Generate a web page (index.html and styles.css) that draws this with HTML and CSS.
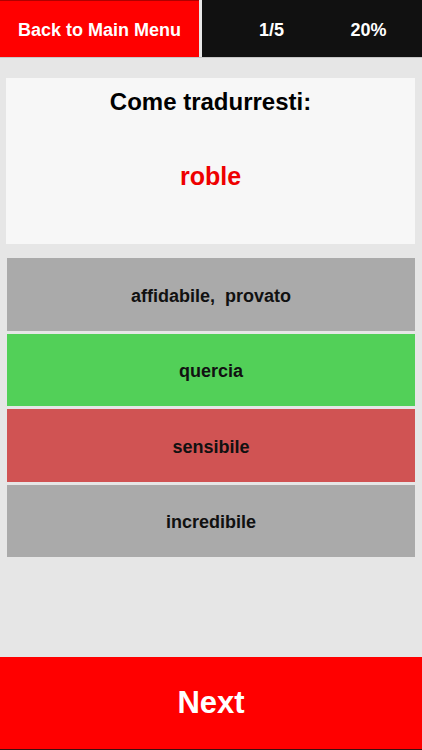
FILE: index.html
```html
<!DOCTYPE html>
<html lang="it">
<head>
<meta charset="utf-8">
<title>Quiz</title>
<link rel="stylesheet" href="styles.css">
</head>
<body>
<div class="app">
  <header class="topbar">
    <div class="back">Back to Main Menu</div>
    <div class="stats">
      <div class="stat">1/5</div>
      <div class="stat">20%</div>
    </div>
  </header>
  <main class="main">
    <section class="card">
      <div class="question">Come tradurresti:</div>
      <div class="word">roble</div>
    </section>
    <div class="options">
      <div class="option">affidabile,&nbsp; provato</div>
      <div class="option correct">quercia</div>
      <div class="option wrong">sensibile</div>
      <div class="option">incredibile</div>
    </div>
  </main>
  <footer class="next">Next</footer>
</div>
</body>
</html>
```
FILE: styles.css
```css
html, body {
  margin: 0;
  padding: 0;
}
body {
  background: #e6e6e6;
  font-family: "Liberation Sans", Arial, sans-serif;
  font-weight: bold;
}
.app {
  display: flex;
  flex-direction: column;
  height: 750px;
}
.topbar {
  display: flex;
  height: 57px;
  gap: 3px;
  background: #e8e8e8;
  border-bottom: 1px solid #c8c8c8;
}
.back {
  width: 199px;
  background: #ff0000;
  color: #fff;
  font-size: 18px;
  display: flex;
  align-items: center;
  justify-content: center;
  box-sizing: border-box;
  padding-top: 3px;
  border-top: 1px solid #b00000;
}
.stats {
  flex: 1;
  background: #111111;
  color: #fff;
  font-size: 18px;
  display: flex;
  padding-left: 21px;
  box-sizing: border-box;
  padding-top: 3px;
}
.stat {
  width: 97px;
  display: flex;
  align-items: center;
  justify-content: center;
}
.main {
  flex: 1;
  display: flex;
  flex-direction: column;
}
.card {
  margin: 20px 7px 0 6px;
  height: 166px;
  box-sizing: border-box;
  padding-top: 10px;
  background: #f7f7f7;
  text-align: center;
}
.question {
  font-size: 24px;
  color: #000;
}
.word {
  font-size: 25px;
  color: #ee0000;
  margin-top: 46px;
}
.options {
  margin: 14px 7px 0 7px;
  display: flex;
  flex-direction: column;
  gap: 3px;
}
.option {
  height: 72.5px;
  box-sizing: border-box;
  padding-top: 4px;
  background: #aaaaaa;
  color: #111;
  font-size: 18px;
  display: flex;
  align-items: center;
  justify-content: center;
}
.option.correct {
  background: #52d058;
}
.option.wrong {
  background: #d05353;
}
.next {
  height: 92px;
  background: #ff0000;
  color: #fff;
  font-size: 31px;
  display: flex;
  align-items: center;
  justify-content: center;
  border-bottom: 1px solid #3a1010;
}
```
